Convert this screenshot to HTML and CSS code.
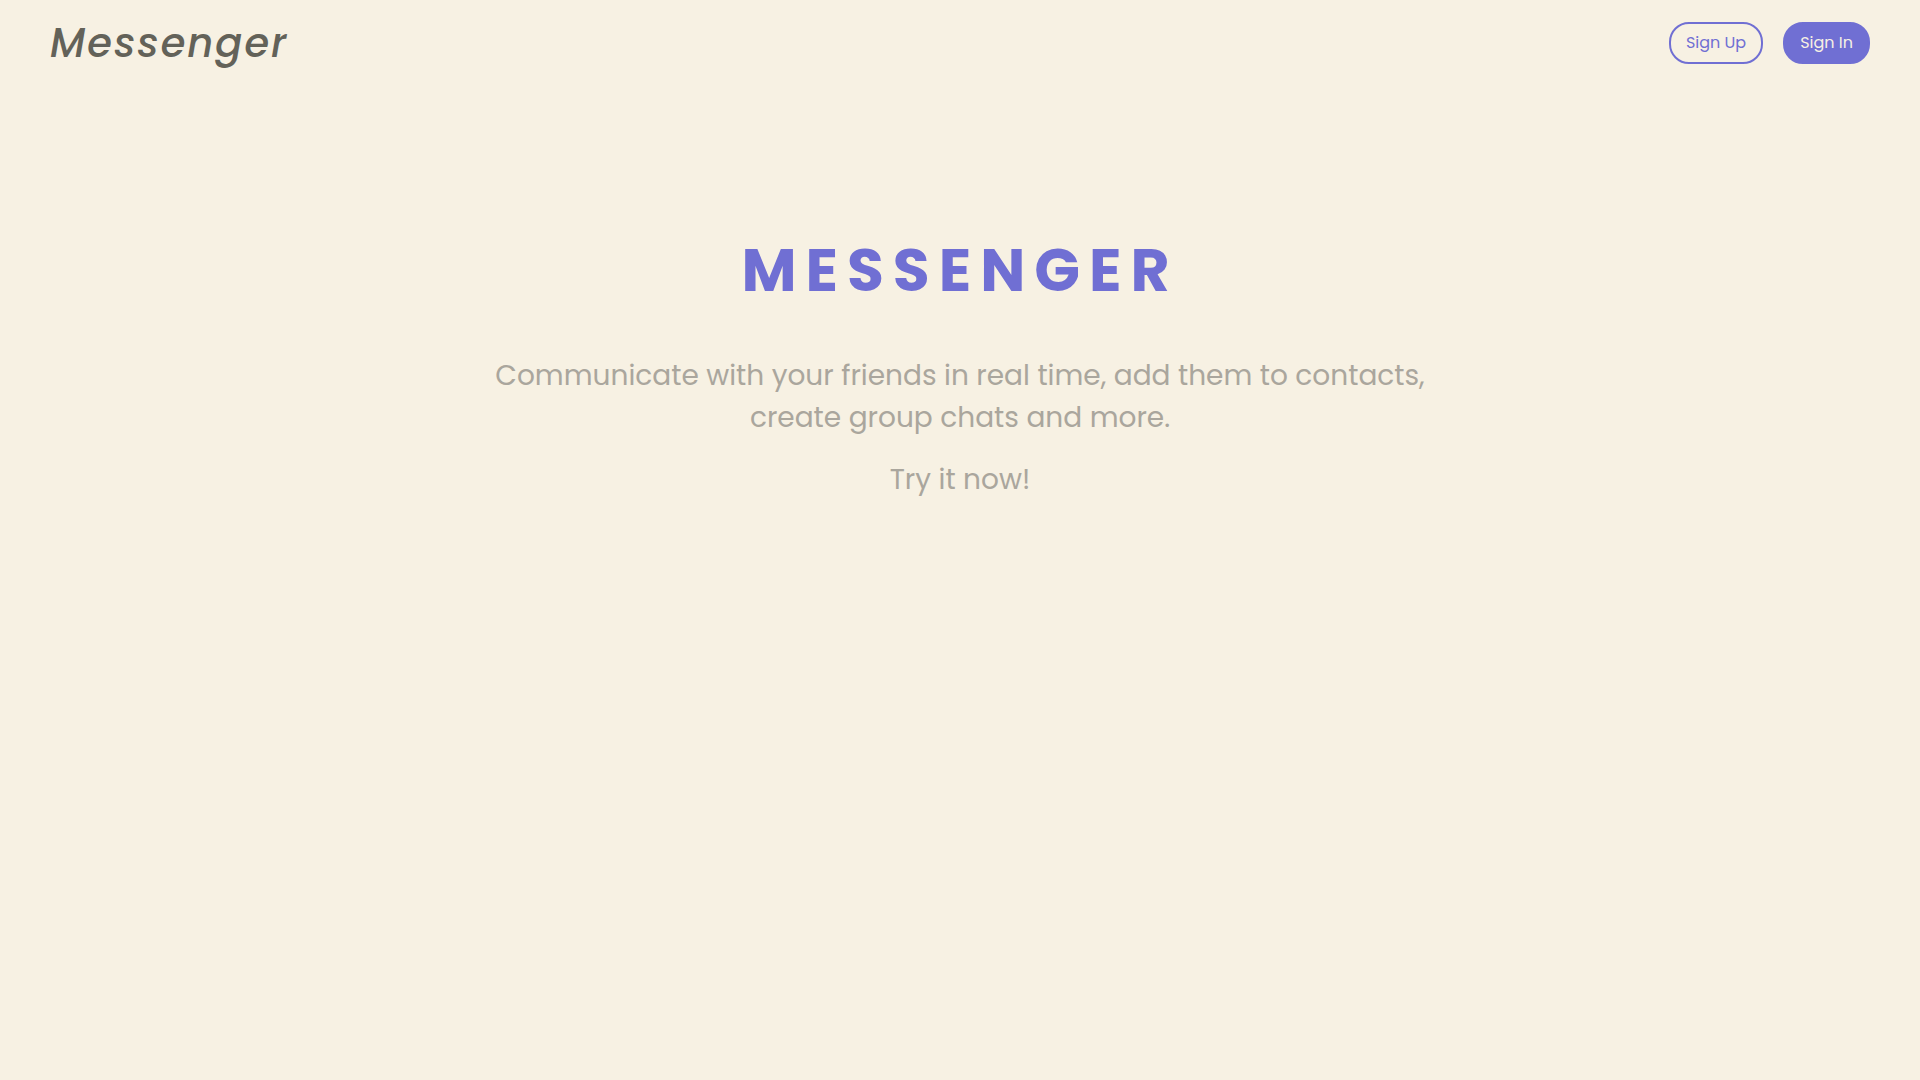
FILE: index.html
```html
<!DOCTYPE html>
<html lang="en">
<head>
<meta charset="utf-8">
<meta name="viewport" content="width=device-width, initial-scale=1">
<title>Messenger</title>
<link rel="stylesheet" href="styles.css">
</head>
<body>
<header class="header">
  <a class="logo" href="#">Messenger</a>
  <nav class="actions">
    <button class="button button-outline" type="button">Sign Up</button>
    <button class="button button-filled" type="button">Sign In</button>
  </nav>
</header>
<main class="hero">
  <h1 class="title">MESSENGER</h1>
  <p class="text">Communicate with your friends in real time, add them to contacts, create group chats and more.</p>
  <p class="text">Try it now!</p>
</main>
</body>
</html>
```
FILE: styles.css
```css
* { box-sizing: border-box; }
body {
  margin: 0;
  min-height: 100vh;
  background: #f7f1e3;
  font-family: Poppins, "Open Sans", sans-serif;
}
.header {
  display: flex;
  justify-content: space-between;
  align-items: center;
  padding: 12px 50px;
}
.logo {
  color: #636259;
  font-size: 40px;
  line-height: 62px;
  font-weight: 500;
  font-style: italic;
  letter-spacing: 2px;
  text-decoration: none;
}
.actions { display: flex; gap: 20px; }
.button {
  height: 42px;
  padding: 0 15px 2px;
  border: 2px solid #706fd3;
  border-radius: 20px;
  font: inherit;
  font-size: 16px;
}
.button-outline { background: transparent; color: #706fd3; }
.button-filled { background: #706fd3; color: #f7f1e3; }
.hero {
  max-width: 1000px;
  margin: 0 auto;
  padding: 139px 16px 0;
  text-align: center;
}
.title {
  margin: 0 0 40px;
  color: #706fd3;
  font-size: 60px;
  line-height: 90px;
  font-weight: 700;
  letter-spacing: 9px;
}
.text {
  margin: 0 0 20px;
  color: #aaa69d;
  font-size: 28px;
  line-height: 42px;
}
```
